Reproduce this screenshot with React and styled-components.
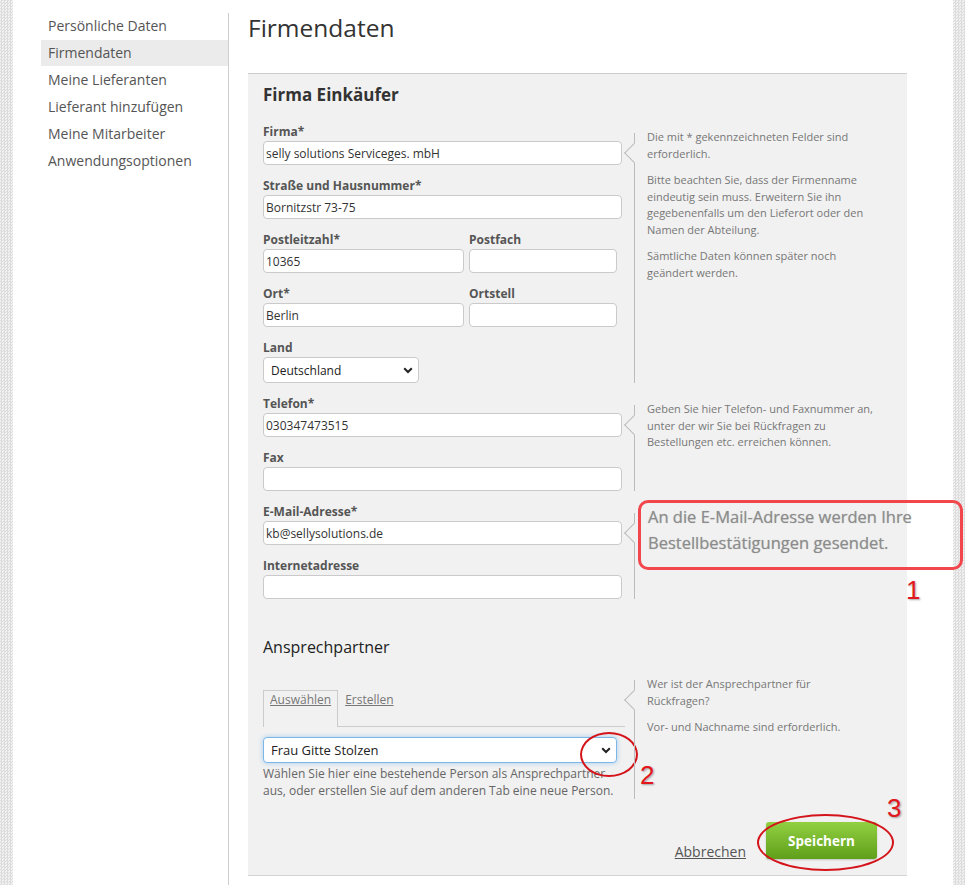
import React from 'react';
import styled, { createGlobalStyle } from 'styled-components';

const GlobalStyle = createGlobalStyle`
  body {
    margin: 0;
    background-color: #e8e8e8;
    background-image: repeating-conic-gradient(#dcdcdc 0 25%, #f1f1f1 0 50%);
    background-size: 3px 3px;
    font-family: "Open Sans", "Liberation Sans", sans-serif;
  }
`;

const Shell = styled.div`
  display: flex;
  align-items: stretch;
  width: 940px;
  min-height: 885px;
  margin-left: 13px;
  background: #fff;
`;

const Sidebar = styled.ul`
  list-style: none;
  box-sizing: border-box;
  width: 216px;
  flex-shrink: 0;
  margin: 13px 0 0;
  padding: 0 0 0 28px;
  border-right: 1px solid #cfcfcf;
`;

const NavItem = styled.li`
  height: 26px;
  margin-bottom: 1px;
  padding-left: 7px;
  line-height: 26px;
  font-size: 14px;
  color: #555;
  background: ${(p) => (p.$active ? '#ebebeb' : 'transparent')};
`;

const Main = styled.main`
  padding: 11px 0 0 19px;
`;

const Title = styled.h1`
  margin: 0 0 28px;
  font-size: 24.5px;
  font-weight: 400;
  line-height: 34px;
  color: #333;
`;

const Panel = styled.section`
  box-sizing: border-box;
  width: 659px;
  padding: 9px 15px 16px;
  background: #f1f1f1;
  border-top: 1px solid #cdcdcd;
  border-bottom: 1px solid #d3d3d3;
`;

const PanelTitle = styled.h2`
  margin: 0 0 17px;
  font-size: 17px;
  font-weight: 700;
  line-height: 24px;
  color: #333;
`;

const Sections = styled.div`
  display: flex;
  flex-direction: column;
  gap: 13px;
`;

const Section = styled.div`
  display: grid;
  grid-template-columns: 359px 1fr;
  column-gap: 12px;
`;

const Fields = styled.div`
  display: flex;
  flex-direction: column;
  gap: ${(p) => (p.$tight ? 0 : 13)}px;
  padding-top: ${(p) => p.$pad || 0}px;
`;

const Row = styled.div`
  display: flex;
  gap: 5px;
`;

const Field = styled.div`
  display: flex;
  flex-direction: column;
  width: ${(p) => (p.$w ? `${p.$w}px` : '100%')};
`;

const Label = styled.label`
  margin-bottom: 1px;
  font-size: 12px;
  font-weight: 700;
  line-height: 16px;
  color: #555;
`;

const Input = styled.input`
  box-sizing: border-box;
  width: 100%;
  height: 24px;
  padding: 0 2px;
  border: 1px solid #cacaca;
  border-radius: 4px;
  background: #fff;
  font-family: inherit;
  font-size: 12px;
  color: #333;
  outline: none;
`;

const SelectWrap = styled.div`
  position: relative;
  width: ${(p) => p.$w}px;
  margin-top: ${(p) => p.$mt || 0}px;
`;

const Select = styled.select`
  appearance: none;
  box-sizing: border-box;
  width: 100%;
  height: 26px;
  padding: 0 0 0 7px;
  border: 1px solid ${(p) => (p.$focus ? '#7db7e8' : '#cacaca')};
  border-radius: 4px;
  background: #fff;
  box-shadow: ${(p) => (p.$focus ? '0 0 5px rgba(102, 175, 233, 0.55)' : 'none')};
  font-family: inherit;
  font-size: ${(p) => (p.$focus ? 13 : 12)}px;
  color: #222;
  outline: none;
`;

const Chevron = styled.svg`
  position: absolute;
  right: 6px;
  top: 10px;
  pointer-events: none;
`;

const Help = styled.aside`
  position: relative;
  margin-top: ${(p) => p.$top}px;
  padding-left: 12px;
  border-left: 1px solid #bcbcbc;
  font-size: 11px;
  line-height: 16.5px;
  color: #777;

  &::before {
    content: '';
    position: absolute;
    left: -8px;
    top: 13px;
    width: 13px;
    height: 13px;
    background: #f1f1f1;
    border-left: 1px solid #bcbcbc;
    border-bottom: 1px solid #bcbcbc;
    transform: rotate(45deg);
  }
`;

const HelpText = styled.div`
  max-width: 232px;
  margin-top: -4px;

  p {
    margin: 0 0 10px;
  }
`;

const Callout = styled.div`
  position: relative;
  margin-top: -9px;
  padding-left: 1px;
  font-size: 16.5px;
  line-height: 26px;
  white-space: nowrap;
  color: #8c8c8c;
  text-shadow: 0 0 1px rgba(0, 0, 0, 0.25);

  &::before {
    content: '';
    position: absolute;
    left: -9px;
    top: -4px;
    width: 325px;
    height: 70px;
    box-sizing: border-box;
    border: 3px solid #f2464d;
    border-radius: 10px;
  }
`;

const Mark = styled.span`
  position: absolute;
  left: ${(p) => p.$l}px;
  top: ${(p) => p.$t}px;
  font-family: "Liberation Sans", Arial, sans-serif;
  font-size: 26px;
  line-height: 1;
  color: #e2161d;
  text-shadow: 1px 1px 2px rgba(0, 0, 0, 0.35);
`;

const Ellipse = styled.span`
  position: absolute;
  left: ${(p) => p.$l}px;
  top: ${(p) => p.$t}px;
  width: ${(p) => p.$w}px;
  height: ${(p) => p.$h}px;
  box-sizing: border-box;
  border: 2px solid #d4141b;
  border-radius: 50%;
  pointer-events: none;
`;

const SubTitle = styled.h3`
  margin: 37px 0 22px;
  font-size: 16px;
  font-weight: 400;
  line-height: 22px;
  color: #222;
`;

const TabRow = styled.div`
  display: flex;
  width: 362px;
  border-bottom: 1px solid #cccccc;
`;

const Tab = styled.a`
  position: relative;
  margin-bottom: ${(p) => (p.$active ? -1 : 0)}px;
  padding: 0 6px ${(p) => (p.$active ? 19 : 18)}px;
  border: 1px solid ${(p) => (p.$active ? '#cccccc' : 'transparent')};
  border-bottom: none;
  background: ${(p) => (p.$active ? '#f1f1f1' : 'transparent')};
  font-size: 12px;
  line-height: 17px;
  color: #777;
  text-decoration: underline;
`;

const Hint = styled.p`
  margin: 2px 0 0;
  font-size: 12px;
  line-height: 17px;
  color: #666;
`;

const Actions = styled.div`
  display: flex;
  justify-content: flex-end;
  align-items: flex-end;
  gap: 20px;
  margin-top: 23px;
  padding-right: 15px;
`;

const CancelLink = styled.a`
  margin-bottom: -3px;
  font-size: 14px;
  line-height: 20px;
  color: #555;
  text-decoration: underline;
`;

const ButtonWrap = styled.div`
  position: relative;
`;

const SaveButton = styled.button`
  display: block;
  width: 111px;
  height: 37px;
  border: none;
  border-radius: 3px;
  background: linear-gradient(#92d042, #5f9f1a);
  box-shadow: 0 1px 2px rgba(0, 0, 0, 0.2);
  font-family: inherit;
  font-size: 13.5px;
  font-weight: 700;
  color: #fff;
  cursor: pointer;
`;

const ChevronIcon = () => (
  <Chevron width="10" height="7" viewBox="0 0 10 7">
    <polyline points="1.2,1.2 5,5 8.8,1.2" fill="none" stroke="#222" strokeWidth="2" />
  </Chevron>
);

const nav = [
  'Persönliche Daten',
  'Firmendaten',
  'Meine Lieferanten',
  'Lieferant hinzufügen',
  'Meine Mitarbeiter',
  'Anwendungsoptionen',
];

const App = () => (
  <>
    <GlobalStyle />
    <Shell>
      <Sidebar>
        {nav.map((item) => (
          <NavItem key={item} $active={item === 'Firmendaten'}>
            {item}
          </NavItem>
        ))}
      </Sidebar>
      <Main>
        <Title>Firmendaten</Title>
        <Panel>
          <PanelTitle>Firma Einkäufer</PanelTitle>
          <Sections>
            <Section>
              <Fields>
                <Field>
                  <Label>Firma*</Label>
                  <Input defaultValue="selly solutions Serviceges. mbH" />
                </Field>
                <Field>
                  <Label>Straße und Hausnummer*</Label>
                  <Input defaultValue="Bornitzstr 73-75" />
                </Field>
                <Row>
                  <Field $w={201}>
                    <Label>Postleitzahl*</Label>
                    <Input defaultValue="10365" />
                  </Field>
                  <Field $w={148}>
                    <Label>Postfach</Label>
                    <Input />
                  </Field>
                </Row>
                <Row>
                  <Field $w={201}>
                    <Label>Ort*</Label>
                    <Input defaultValue="Berlin" />
                  </Field>
                  <Field $w={148}>
                    <Label>Ortstell</Label>
                    <Input />
                  </Field>
                </Row>
                <Field>
                  <Label>Land</Label>
                  <SelectWrap $w={156}>
                    <Select defaultValue="de">
                      <option value="de">Deutschland</option>
                    </Select>
                    <ChevronIcon />
                  </SelectWrap>
                </Field>
              </Fields>
              <Help $top={9}>
                <HelpText>
                  <p>Die mit * gekennzeichneten Felder sind erforderlich.</p>
                  <p>
                    Bitte beachten Sie, dass der Firmenname eindeutig sein muss. Erweitern Sie ihn
                    gegebenenfalls um den Lieferort oder den Namen der Abteilung.
                  </p>
                  <p>Sämtliche Daten können später noch geändert werden.</p>
                </HelpText>
              </Help>
            </Section>

            <Section>
              <Fields>
                <Field>
                  <Label>Telefon*</Label>
                  <Input defaultValue="030347473515" />
                </Field>
                <Field>
                  <Label>Fax</Label>
                  <Input />
                </Field>
              </Fields>
              <Help $top={9}>
                <HelpText>
                  <p>
                    Geben Sie hier Telefon- und Faxnummer an, unter der wir Sie bei Rückfragen zu
                    Bestellungen etc. erreichen können.
                  </p>
                </HelpText>
              </Help>
            </Section>

            <Section>
              <Fields>
                <Field>
                  <Label>E-Mail-Adresse*</Label>
                  <Input defaultValue="kb@sellysolutions.de" />
                </Field>
                <Field>
                  <Label>Internetadresse</Label>
                  <Input />
                </Field>
              </Fields>
              <Help $top={9}>
                <Callout>
                  An die E-Mail-Adresse werden Ihre
                  <br />
                  Bestellbestätigungen gesendet.
                  <Mark $l={259} $t={73}>1</Mark>
                </Callout>
              </Help>
            </Section>
          </Sections>

          <SubTitle>Ansprechpartner</SubTitle>
          <Section>
            <Fields $pad={10} $tight>
              <TabRow>
                <Tab href="#" $active>Auswählen</Tab>
                <Tab href="#">Erstellen</Tab>
              </TabRow>
              <SelectWrap $w={354} $mt={10}>
                <Select $focus defaultValue="gs">
                  <option value="gs">Frau Gitte Stolzen</option>
                </Select>
                <ChevronIcon />
                <Ellipse $l={317} $t={-5} $w={58} $h={45} />
                <Mark $l={377} $t={25}>2</Mark>
              </SelectWrap>
              <Hint>
                Wählen Sie hier eine bestehende Person als Ansprechpartner aus, oder erstellen Sie
                auf dem anderen Tab eine neue Person.
              </Hint>
            </Fields>
            <Help $top={0}>
              <HelpText>
                <p>
                  Wer ist der Ansprechpartner für
                  <br />
                  Rückfragen?
                </p>
                <p>Vor- und Nachname sind erforderlich.</p>
              </HelpText>
            </Help>
          </Section>

          <Actions>
            <CancelLink href="#">Abbrechen</CancelLink>
            <ButtonWrap>
              <SaveButton type="button">Speichern</SaveButton>
              <Ellipse $l={-9} $t={-8} $w={137} $h={57} />
              <Mark $l={121} $t={-27}>3</Mark>
            </ButtonWrap>
          </Actions>
        </Panel>
      </Main>
    </Shell>
  </>
);

export default App;
